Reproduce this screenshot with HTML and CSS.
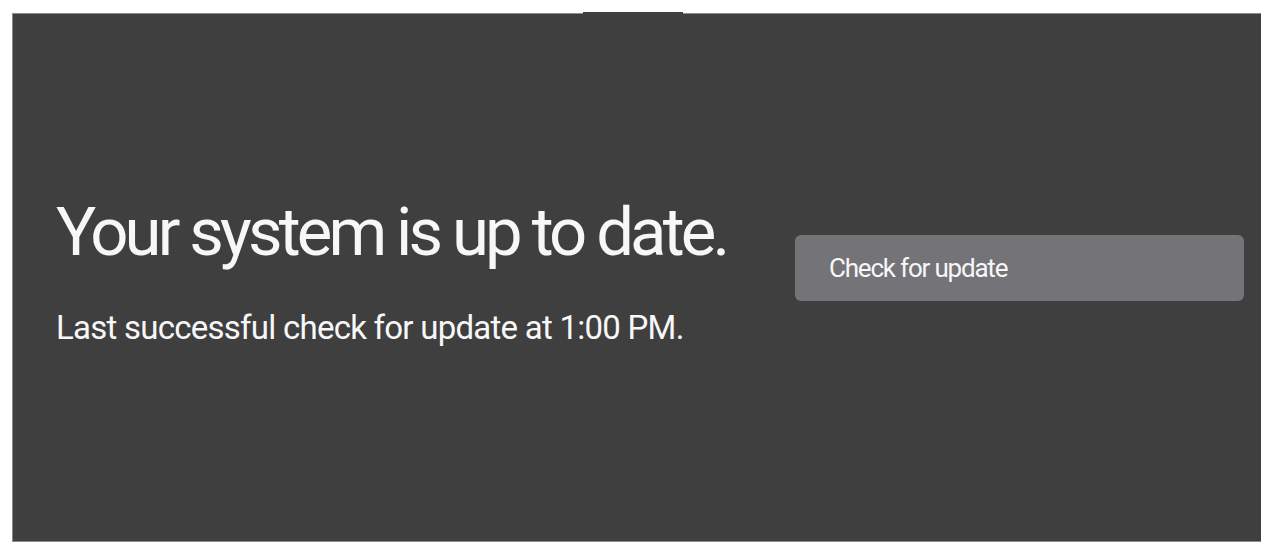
FILE: index.html
```html
<!DOCTYPE html>
<html lang="en">
<head>
<meta charset="utf-8">
<title>Windows Update</title>
<link rel="stylesheet" href="styles.css">
</head>
<body>
<main class="panel">
  <section class="status">
    <h1 class="status-title">Your system is up to date.</h1>
    <p class="status-sub">Last successful check for update at 1:00 PM.</p>
  </section>
  <div class="actions">
    <button class="check-btn" type="button">Check for update</button>
  </div>
</main>
</body>
</html>
```

FILE: styles.css
```css
html, body {
  margin: 0;
  padding: 0;
  background: #ffffff;
}
body {
  padding: 13px 16px 14px 12px;
  font-family: Roboto, "Liberation Sans", sans-serif;
}
.panel {
  position: relative;
  box-sizing: border-box;
  height: 529px;
  background: #3f3f3f;
  border: 1px solid #8c8c8c;
  border-right: none;
  display: flex;
  align-items: center;
  padding: 0 17px 14px 43px;
  color: #f7f7f7;
}
.panel::before {
  content: "";
  position: absolute;
  top: -2px;
  left: 570px;
  width: 100px;
  height: 2px;
  background: #3f3f3f;
}
.status {
  flex: 1;
}
.status-title {
  margin: 0;
  font-weight: 400;
  font-size: 67px;
  letter-spacing: -3.85px;
  line-height: 80px;
  position: relative;
  top: -1px;
}
.status-sub {
  margin: 35px 0 0;
  font-size: 33px;
  letter-spacing: -0.75px;
  line-height: 40px;
}
.actions {
  width: 449px;
  margin-bottom: 6px;
}
.check-btn {
  display: block;
  width: 100%;
  height: 66px;
  border: none;
  border-radius: 6px;
  background: #747377;
  color: #f7f7f7;
  font-family: Roboto, "Liberation Sans", sans-serif;
  font-size: 26px;
  letter-spacing: -1.2px;
  text-align: left;
  padding: 0 0 0 34px;
}
```
